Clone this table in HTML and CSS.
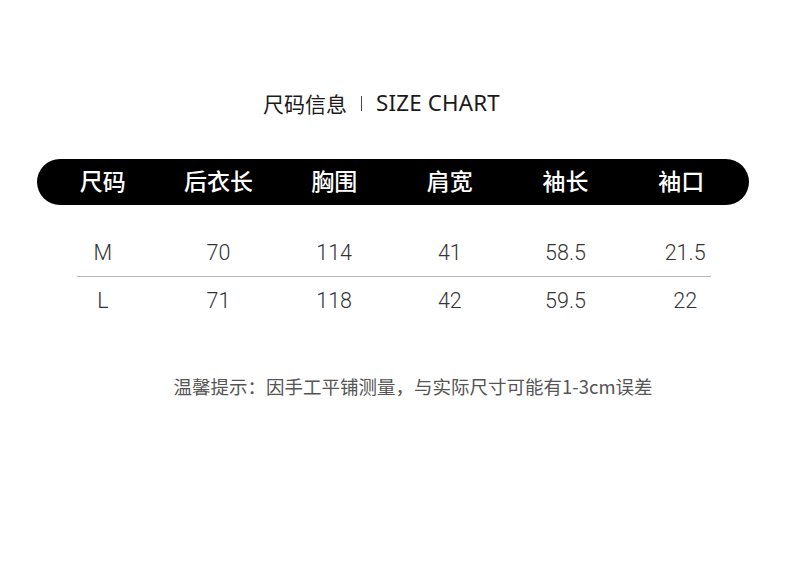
FILE: index.html
```html
<!DOCTYPE html>
<html lang="zh">
<head>
<meta charset="utf-8">
<link rel="stylesheet" href="styles.css">
</head>
<body>
<div class="page">
  <h1 class="title"><span class="title-cn">尺码信息</span><span class="sep"></span><span class="title-en">SIZE CHART</span></h1>
  <div class="pill">
    <div class="cell">尺码</div>
    <div class="cell">后衣长</div>
    <div class="cell">胸围</div>
    <div class="cell">肩宽</div>
    <div class="cell">袖长</div>
    <div class="cell">袖口</div>
  </div>
  <div class="rows">
    <div class="row">
      <div class="cell">M</div>
      <div class="cell">70</div>
      <div class="cell">114</div>
      <div class="cell">41</div>
      <div class="cell">58.5</div>
      <div class="cell">21.5</div>
    </div>
    <div class="divider"></div>
    <div class="row">
      <div class="cell">L</div>
      <div class="cell">71</div>
      <div class="cell">118</div>
      <div class="cell">42</div>
      <div class="cell">59.5</div>
      <div class="cell">22</div>
    </div>
  </div>
  <p class="note">温馨提示：因手工平铺测量，与实际尺寸可能有1-3cm误差</p>
</div>
</body>
</html>
```
FILE: styles.css
```css
html, body {
  margin: 0;
  padding: 0;
  background: #fff;
}
body {
  font-family: "Noto Sans CJK SC", "Noto Sans", sans-serif;
  color: #222;
}
.page {
  width: 790px;
  padding-top: 88px;
}
.title {
  margin: 0;
  height: 30px;
  line-height: 30px;
  font-size: 21px;
  font-weight: 400;
  display: flex;
  justify-content: center;
  align-items: center;
  color: #1a1a1a;
  padding-right: 27px;
}
.sep {
  display: inline-block;
  width: 1px;
  height: 15px;
  background: #444;
  margin: 0 14px;
}
.title-en {
  font-family: "Noto Sans", "Open Sans", sans-serif;
  font-size: 22.3px;
  letter-spacing: 0.2px;
}
.pill {
  margin: 41px 41px 0 37px;
  height: 46px;
  background: #000;
  border-radius: 23px;
  padding: 0 10px 0 8px;
  display: grid;
  grid-template-columns: repeat(6, 1fr);
  align-items: center;
  color: #fff;
  font-size: 23px;
  font-weight: 500;
}
.pill .cell {
  text-align: center;
  box-sizing: border-box;
  height: 46px;
  line-height: 43px;
}
.rows {
  margin: 25px 51px 0 45px;
}
.row {
  display: grid;
  grid-template-columns: repeat(6, 1fr);
  height: 46px;
  align-items: center;
  font-family: Roboto, "Liberation Sans", Arial, sans-serif;
  font-size: 21.5px;
  font-weight: 300;
  color: #333;
}
.row .cell {
  text-align: center;
  line-height: 46px;
}
.row .cell:last-child {
  padding-left: 8px;
}
.divider {
  margin-left: 32px;
  width: 634px;
  height: 1px;
  background: #b8b8b8;
}
.row + .divider + .row {
  height: 48px;
}
.note {
  margin: 48px 0 0;
  padding-left: 36px;
  text-align: center;
  font-size: 18.5px;
  line-height: 26px;
  color: #555;
}
```
